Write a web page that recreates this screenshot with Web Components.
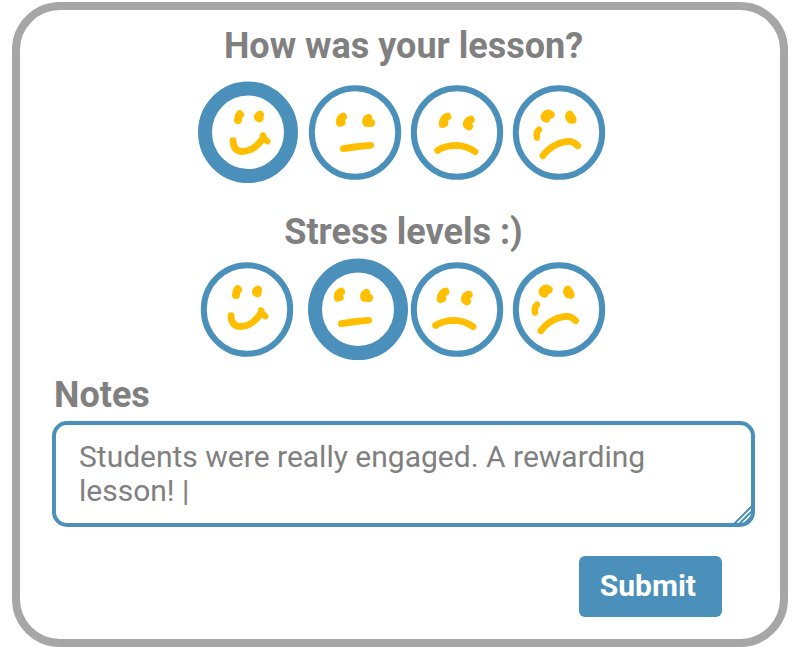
<!DOCTYPE html>
<html lang="en">
<head>
<meta charset="utf-8">
<title>Lesson feedback</title>
<style>
  body {
    margin: 0;
    background: #fff;
    color: #808080;
    font-family: Roboto, "Liberation Sans", sans-serif;
    --accent: #4a90ba;
    --face: #ffbf00;
    --frame: #a6a6a6;
  }
</style>
</head>
<body>
<feedback-card>
  <mood-picker label="How was your lesson?" name="lesson" selected="0"></mood-picker>
  <mood-picker label="Stress levels :)" name="stress" selected="1" compact></mood-picker>
  <notes-field label="Notes">Students were really engaged. A rewarding lesson! |</notes-field>
  <submit-button slot="action">Submit</submit-button>
</feedback-card>

<script>
  class FeedbackCard extends HTMLElement {
    constructor() {
      super();
      this.attachShadow({ mode: 'open' }).innerHTML = `
        <style>
          :host { display: block; padding: 2px 12px 3px; }
          form {
            box-sizing: border-box;
            display: flex; flex-direction: column;
            min-height: calc(100vh - 5px);
            border: 8px solid var(--frame);
            border-radius: 48px;
            padding: 15px 25px 22px 32px;
          }
          .actions { display: flex; justify-content: flex-end; padding: 29px 33px 0 0; }
        </style>
        <form>
          <slot></slot>
          <div class="actions"><slot name="action"></slot></div>
        </form>`;
    }
  }

  // Hand-drawn strokes of each face; drawn at three units to the pixel.
  const MOODS = [
    { name: 'Happy', x: -10, cx: 47,
      eyes: 'M146 118Q141 124 141 135M146 118L147 119 M207 119Q198 123 202 128L206 130',
      mouth: 'M126 197C126 246 184 236 214 192',
      tail: 'M216 181Q217 190 229 199' },
    { name: 'Neutral', x: -8, cx: 49,
      eyes: 'M126 125Q116 130 117 143L122 142 M202 129Q194 133 196 143L210 144',
      mouth: 'M127 221L160 216Q180 213 209 211', tail: '' },
    { name: 'Unhappy', x: -7, cx: 47,
      eyes: 'M130 125Q117 131 116 147L121 145 M200 134Q187 140 189 150L195 154',
      mouth: 'M101 226Q125 211 158 211Q191 213 213 230', tail: '' },
    { name: 'Upset', x: -8, cx: 47,
      eyes: 'M137 119Q127 111 119 123Q118 130 124 131 M194 119Q190 128 196 133L203 134L200 127',
      mouth: 'M114 242C136 212 170 199 193 199Q204 199 218 212',
      tail: 'M102 164Q92 173 96 188' }
  ];

  class MoodFace extends HTMLElement {
    constructor() { super(); this.attachShadow({ mode: 'open' }); }
    connectedCallback() {
      const mood = MOODS[Number(this.getAttribute('mood'))];
      const shift = this.hasAttribute('raised') ? -2 : 0;
      this.shadowRoot.innerHTML = `
        <style>
          :host { display: block; pointer-events: none; }
          svg { display: block; width: 92px; height: 95px; overflow: visible; }
          ellipse { fill: #fff; stroke: var(--accent); stroke-width: 6px; }
          .on { display: none; stroke-width: 14px; }
          :host([active]) .on { display: inline; }
          :host([active]) .off { display: none; }
          .ink { fill: none; stroke: var(--face); stroke-linecap: round; stroke-linejoin: round; }
          .eyes { stroke-width: 24; }
          .mouth { stroke-width: 20.5; }
          .tail { stroke-width: 19; }
        </style>
        <svg viewBox="0 0 92 95" aria-hidden="true">
          <ellipse class="off" cx="46" cy="47.5" rx="43.2" ry="44.3"/>
          <ellipse class="on" cx="${mood.cx}" cy="47.3" rx="43" ry="43.8"/>
          <g class="ink" transform="translate(${mood.x + shift} ${shift - 10}) scale(.33333)">
            <path class="eyes" d="${mood.eyes}"/>
            <path class="mouth" d="${mood.mouth}"/>
            <path class="tail" d="${mood.tail}"/>
          </g>
        </svg>`;
    }
  }

  class MoodPicker extends HTMLElement {
    constructor() { super(); this.attachShadow({ mode: 'open' }); }
    connectedCallback() {
      const name = this.getAttribute('name');
      const selected = Number(this.getAttribute('selected'));
      const raised = this.hasAttribute('compact') ? 'raised' : '';
      this.shadowRoot.innerHTML = `
        <style>
          :host { display: block; padding-bottom: 31px; --gap: 18px; }
          :host([compact]) { padding-bottom: 17px; --gap: 9px; }
          fieldset { border: 0; margin: 0; padding: 0; min-width: 0; }
          legend { width: 100%; padding: 0; text-align: center; font-size: 36px; font-weight: 700; line-height: 42px; }
          .row { display: flex; justify-content: center; gap: 10px; padding: var(--gap) 2px 0 0; }
          label { display: grid; cursor: pointer; border-radius: 50%; }
          label:first-child { margin-right: 6px; }
          input, mood-face { grid-area: 1 / 1; }
          input { appearance: none; margin: 0; border-radius: 50%; }
          label:has(:focus-visible) { outline: 2px solid #808080; outline-offset: 4px; }
        </style>
        <fieldset>
          <legend>${this.getAttribute('label')}</legend>
          <div class="row">${MOODS.map((m, i) => `
            <label><input type="radio" name="${name}" value="${i}" aria-label="${m.name}" ${i === selected ? 'checked' : ''}><mood-face mood="${i}" ${raised} ${i === selected ? 'active' : ''}></mood-face></label>`).join('')}
          </div>
        </fieldset>`;
      this.shadowRoot.addEventListener('change', () => {
        this.shadowRoot.querySelectorAll('input').forEach(input =>
          input.nextElementSibling.toggleAttribute('active', input.checked));
      });
    }
  }

  class NotesField extends HTMLElement {
    constructor() { super(); this.attachShadow({ mode: 'open' }); }
    connectedCallback() {
      this.shadowRoot.innerHTML = `
        <style>
          :host { display: block; }
          label { display: block; padding: 0 2px 5px; font-size: 36px; font-weight: 700; line-height: 42px; }
          .box { position: relative; }
          textarea {
            display: block; box-sizing: border-box; width: 100%; height: 106px; margin: 0;
            border: 4px solid var(--accent); border-radius: 15px; padding: 15px 23px;
            background: #fff; color: inherit; font: 400 30px/34px Roboto, "Liberation Sans", sans-serif;
            resize: none; outline: 0; overflow: hidden;
          }
          svg { position: absolute; right: 0; bottom: 0; width: 24px; height: 24px; pointer-events: none; }
          path { fill: none; stroke: var(--accent); stroke-width: 2; }
        </style>
        <label for="notes">${this.getAttribute('label')}</label>
        <div class="box">
          <textarea id="notes"></textarea>
          <svg viewBox="0 0 24 24" aria-hidden="true"><path d="M2 22L22 2M7 22L22 7M12 22L22 12"/></svg>
        </div>`;
      this.shadowRoot.querySelector('textarea').value = this.textContent.trim();
    }
  }

  class SubmitButton extends HTMLElement {
    constructor() {
      super();
      this.attachShadow({ mode: 'open' }).innerHTML = `
        <style>
          :host { display: block; }
          button {
            display: block; border: 0; margin: 0; border-radius: 6px; padding: 12px 26px 14px 21px;
            background: var(--accent); color: #fff; cursor: pointer;
            font: 700 30px/35px Roboto, "Liberation Sans", sans-serif;
          }
        </style>
        <button type="button"><slot></slot></button>`;
    }
  }

  customElements.define('mood-face', MoodFace);
  customElements.define('mood-picker', MoodPicker);
  customElements.define('submit-button', SubmitButton);
  customElements.define('feedback-card', FeedbackCard);
  customElements.define('notes-field', NotesField);
</script>
</body>
</html>
